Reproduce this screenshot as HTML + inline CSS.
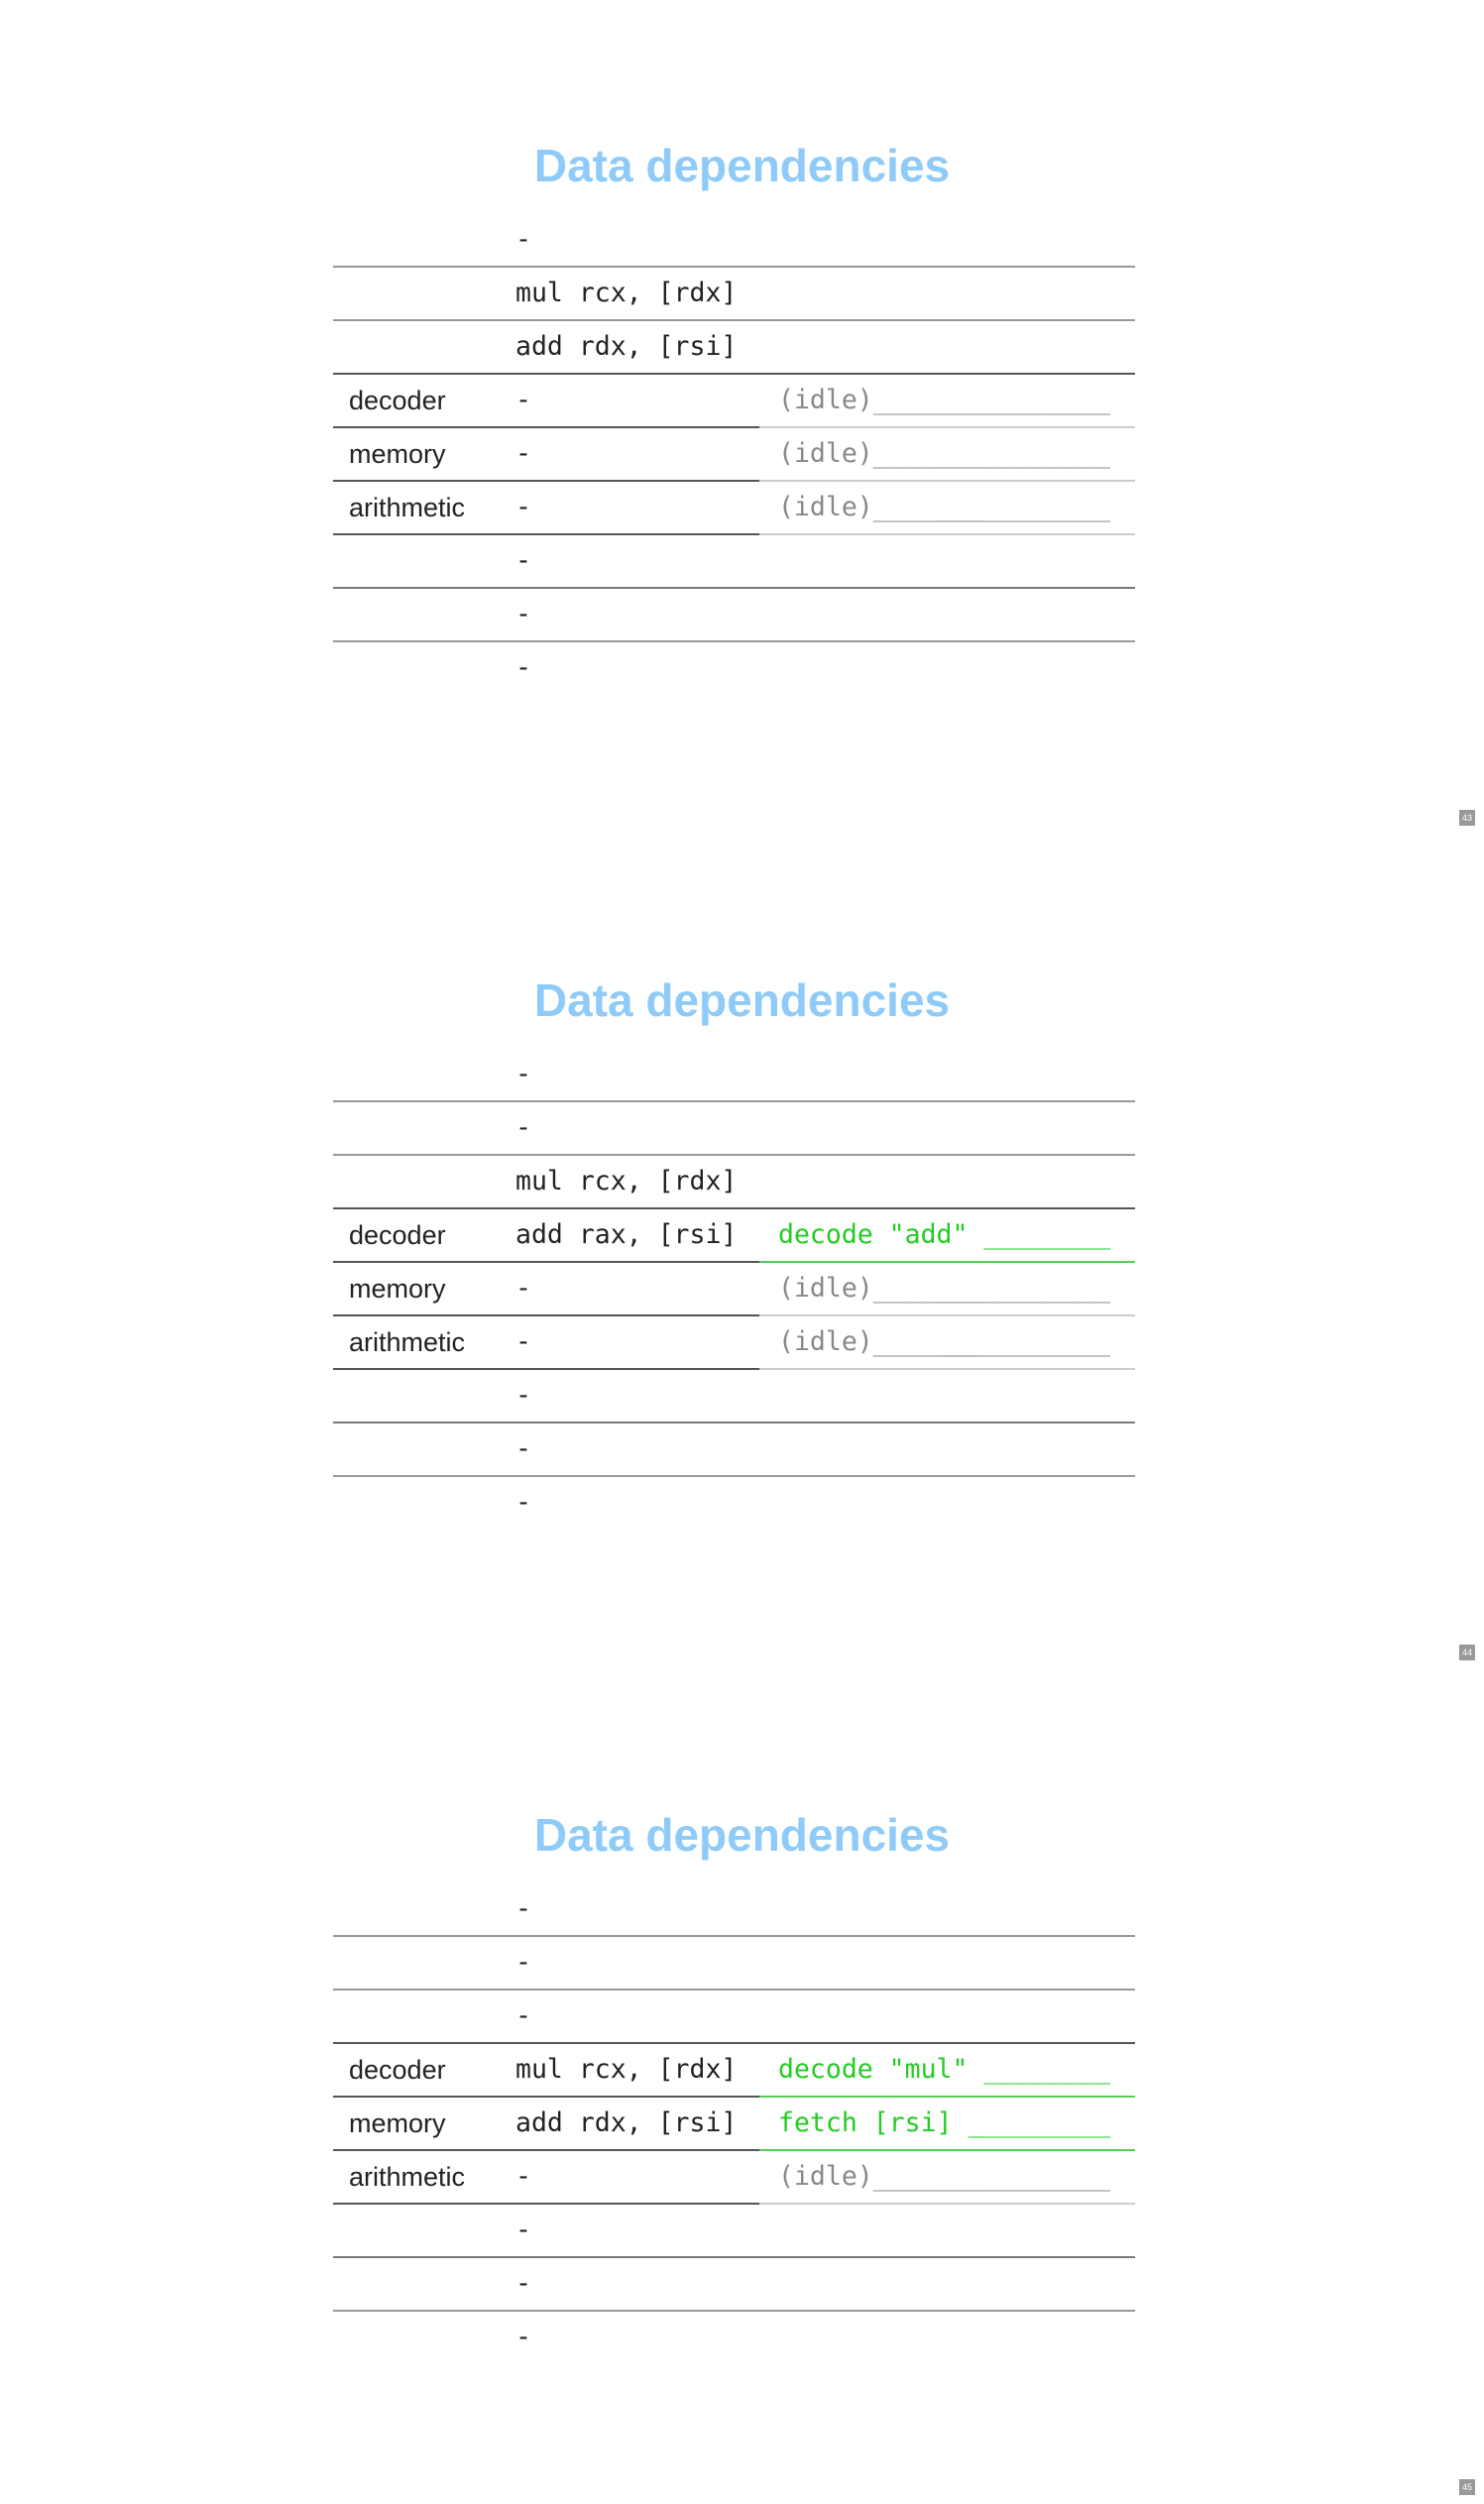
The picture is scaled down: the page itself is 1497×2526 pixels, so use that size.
<!DOCTYPE html>
<html><head><meta charset="utf-8"><style>
body{margin:0;width:1497px;height:2525px;background:#fff;position:relative;overflow:hidden}
.s{position:absolute;left:0;width:1497px;height:842px}
.t{position:absolute;left:0;width:1497px;text-align:center;top:144px;font:bold 46px/46px "Liberation Sans",sans-serif;color:#8fcbf8}
.r{position:absolute;height:54px;line-height:54px;white-space:pre;color:#222}
.lb{left:352px;font:27px/54px "Liberation Sans",sans-serif}
.in{left:520px;font:26.5px/54px "DejaVu Sans Mono","Liberation Mono",monospace}
.st{left:785px;font:26.5px/54px "DejaVu Sans Mono","Liberation Mono",monospace}
.g{color:#888}.gr{color:#22cc22}
.l{position:absolute;height:2px}
.pn{position:absolute;left:1472px;top:817px;width:16px;height:16px;background:#999;color:#fff;font:9px/16px "Liberation Sans",sans-serif;text-align:center}
</style></head><body>

<div class="s" style="top:0">
<div class="t">Data dependencies</div>
<div class="r in" style="top:215px">-</div>
<div class="r in" style="top:269px">mul rcx, [rdx]</div>
<div class="r in" style="top:323px">add rdx, [rsi]</div>
<div class="r lb" style="top:377px">decoder</div><div class="r in" style="top:377px">-</div><div class="r st g" style="top:377px">(idle)_______________</div>
<div class="r lb" style="top:431px">memory</div><div class="r in" style="top:431px">-</div><div class="r st g" style="top:431px">(idle)_______________</div>
<div class="r lb" style="top:485px">arithmetic</div><div class="r in" style="top:485px">-</div><div class="r st g" style="top:485px">(idle)_______________</div>
<div class="r in" style="top:539px">-</div>
<div class="r in" style="top:593px">-</div>
<div class="r in" style="top:647px">-</div>
<div class="l" style="top:268px;left:336px;width:809px;background:#999"></div>
<div class="l" style="top:322px;left:336px;width:809px;background:#999"></div>
<div class="l" style="top:376px;left:336px;width:809px;background:#555"></div>
<div class="l" style="top:430px;left:336px;width:430px;background:#555"></div><div class="l" style="top:430px;left:766px;width:379px;background:#ccc"></div>
<div class="l" style="top:484px;left:336px;width:430px;background:#555"></div><div class="l" style="top:484px;left:766px;width:379px;background:#ccc"></div>
<div class="l" style="top:538px;left:336px;width:430px;background:#555"></div><div class="l" style="top:538px;left:766px;width:379px;background:#ccc"></div>
<div class="l" style="top:592px;left:336px;width:809px;background:#777"></div>
<div class="l" style="top:646px;left:336px;width:809px;background:#999"></div>
<div class="pn">43</div>
</div>

<div class="s" style="top:842px">
<div class="t">Data dependencies</div>
<div class="r in" style="top:215px">-</div>
<div class="r in" style="top:269px">-</div>
<div class="r in" style="top:323px">mul rcx, [rdx]</div>
<div class="r lb" style="top:377px">decoder</div><div class="r in" style="top:377px">add rax, [rsi]</div><div class="r st gr" style="top:377px">decode "add" ________</div>
<div class="r lb" style="top:431px">memory</div><div class="r in" style="top:431px">-</div><div class="r st g" style="top:431px">(idle)_______________</div>
<div class="r lb" style="top:485px">arithmetic</div><div class="r in" style="top:485px">-</div><div class="r st g" style="top:485px">(idle)_______________</div>
<div class="r in" style="top:539px">-</div>
<div class="r in" style="top:593px">-</div>
<div class="r in" style="top:647px">-</div>
<div class="l" style="top:268px;left:336px;width:809px;background:#999"></div>
<div class="l" style="top:322px;left:336px;width:809px;background:#999"></div>
<div class="l" style="top:376px;left:336px;width:809px;background:#555"></div>
<div class="l" style="top:430px;left:336px;width:430px;background:#555"></div><div class="l" style="top:430px;left:766px;width:379px;background:#55cc55"></div>
<div class="l" style="top:484px;left:336px;width:430px;background:#555"></div><div class="l" style="top:484px;left:766px;width:379px;background:#ccc"></div>
<div class="l" style="top:538px;left:336px;width:430px;background:#555"></div><div class="l" style="top:538px;left:766px;width:379px;background:#ccc"></div>
<div class="l" style="top:592px;left:336px;width:809px;background:#777"></div>
<div class="l" style="top:646px;left:336px;width:809px;background:#999"></div>
<div class="pn">44</div>
</div>

<div class="s" style="top:1684px">
<div class="t">Data dependencies</div>
<div class="r in" style="top:215px">-</div>
<div class="r in" style="top:269px">-</div>
<div class="r in" style="top:323px">-</div>
<div class="r lb" style="top:377px">decoder</div><div class="r in" style="top:377px">mul rcx, [rdx]</div><div class="r st gr" style="top:377px">decode "mul" ________</div>
<div class="r lb" style="top:431px">memory</div><div class="r in" style="top:431px">add rdx, [rsi]</div><div class="r st gr" style="top:431px">fetch [rsi] _________</div>
<div class="r lb" style="top:485px">arithmetic</div><div class="r in" style="top:485px">-</div><div class="r st g" style="top:485px">(idle)_______________</div>
<div class="r in" style="top:539px">-</div>
<div class="r in" style="top:593px">-</div>
<div class="r in" style="top:647px">-</div>
<div class="l" style="top:268px;left:336px;width:809px;background:#999"></div>
<div class="l" style="top:322px;left:336px;width:809px;background:#999"></div>
<div class="l" style="top:376px;left:336px;width:809px;background:#555"></div>
<div class="l" style="top:430px;left:336px;width:430px;background:#555"></div><div class="l" style="top:430px;left:766px;width:379px;background:#55cc55"></div>
<div class="l" style="top:484px;left:336px;width:430px;background:#555"></div><div class="l" style="top:484px;left:766px;width:379px;background:#55cc55"></div>
<div class="l" style="top:538px;left:336px;width:430px;background:#555"></div><div class="l" style="top:538px;left:766px;width:379px;background:#ccc"></div>
<div class="l" style="top:592px;left:336px;width:809px;background:#777"></div>
<div class="l" style="top:646px;left:336px;width:809px;background:#999"></div>
<div class="pn">45</div>
</div>

</body></html>
